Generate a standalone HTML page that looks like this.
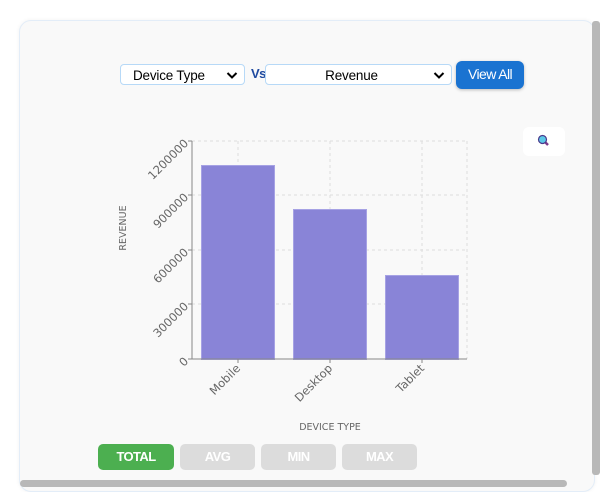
<!DOCTYPE html>
<html><head><style>
body{margin:0;width:610px;height:490px;background:#fff;position:relative;overflow:hidden;font-family:"Liberation Sans",sans-serif}
.card{position:absolute;left:19px;top:20px;width:574px;height:470px;background:#f9f9f9;border:1px solid #e3edf8;border-radius:12px;box-shadow:0 0 4px rgba(0,0,0,.06)}
.vs{position:absolute;left:592px;top:21px;width:8px;height:454px;background:#b8b8b8;border-radius:3px}
.hs{position:absolute;left:20px;top:480px;width:547px;height:7px;background:#b8b8b8;border-radius:4px}
.sel{position:absolute;top:64px;height:21px;border:1px solid #b7d9f7;border-radius:4px;background:#fff;font-size:13.5px;line-height:21px;box-sizing:border-box;color:#000;letter-spacing:-.2px}
.btn{position:absolute;top:444px;height:26px;border-radius:5px;color:#fff;font-weight:bold;font-size:13px;line-height:26px;text-align:center;letter-spacing:-.6px}
</style></head><body>
<div class="card"></div>
<div class="vs"></div><div class="hs"></div>
<div class="sel" style="left:120px;width:125px;padding-left:12px">Device Type<svg style="position:absolute;right:6px;top:6px" width="12" height="9" viewBox="0 0 12 9"><path d="M1.5 2l4.5 4.5 4.5-4.5" stroke="#000" stroke-width="2" fill="none"/></svg></div>
<div style="position:absolute;left:251px;top:66px;font-size:13px;font-weight:bold;color:#1f4aa0;letter-spacing:-.5px">Vs</div>
<div class="sel" style="left:265px;width:187px;text-align:center;padding-right:14px">Revenue<svg style="position:absolute;right:6px;top:6px" width="12" height="9" viewBox="0 0 12 9"><path d="M1.5 2l4.5 4.5 4.5-4.5" stroke="#000" stroke-width="2" fill="none"/></svg></div>
<div style="position:absolute;left:456px;top:61px;width:68px;height:28px;background:#1a73d1;border-radius:6px;color:#fff;font-size:14px;line-height:27px;text-align:center;letter-spacing:-.6px;box-shadow:0 1px 3px rgba(0,0,0,.25)">View All</div>
<div style="position:absolute;left:523px;top:127px;width:42px;height:29px;background:#fff;border-radius:6px"></div>
<svg style="position:absolute;left:537px;top:134px" width="14" height="14" viewBox="0 0 14 14"><line x1="7" y1="7" x2="11" y2="11" stroke="#7a3a8c" stroke-width="2.5"/><circle cx="5.5" cy="5.5" r="4" fill="#5cc8e8" stroke="#4a3a8c" stroke-width="1.2"/></svg>
<svg style="position:absolute;left:0;top:0" width="610" height="490">
<g stroke="#ddd" stroke-dasharray="3,3" stroke-width="1">
<line x1="192" y1="141" x2="467" y2="141"/><line x1="192" y1="195" x2="467" y2="195"/><line x1="192" y1="250" x2="467" y2="250"/><line x1="192" y1="304" x2="467" y2="304"/>
<line x1="238" y1="141" x2="238" y2="359"/><line x1="330" y1="141" x2="330" y2="359"/><line x1="422" y1="141" x2="422" y2="359"/><line x1="467" y1="141" x2="467" y2="359"/>
</g>
<g fill="#8984d7" stroke="#a6a2e4">
<rect x="201.5" y="165.5" width="73" height="194"/><rect x="293.5" y="209.5" width="73" height="150"/><rect x="385.5" y="275.5" width="73" height="84"/>
</g>
<line x1="192" y1="141" x2="192" y2="359" stroke="#888"/><line x1="192" y1="359" x2="467" y2="359" stroke="#888"/>
<g stroke="#888"><line x1="188" y1="141" x2="192" y2="141"/><line x1="188" y1="195" x2="192" y2="195"/><line x1="188" y1="250" x2="192" y2="250"/><line x1="188" y1="304" x2="192" y2="304"/><line x1="188" y1="359" x2="192" y2="359"/>
<line x1="238" y1="359" x2="238" y2="363"/><line x1="330" y1="359" x2="330" y2="363"/><line x1="422" y1="359" x2="422" y2="363"/></g>
<g font-family="'DejaVu Sans',sans-serif" font-size="11.5" fill="#666" text-anchor="end">
<text transform="translate(189,144) rotate(-45)">1200000</text>
<text transform="translate(189,198) rotate(-45)">900000</text>
<text transform="translate(189,253) rotate(-45)">600000</text>
<text transform="translate(189,307) rotate(-45)">300000</text>
<text transform="translate(189,362) rotate(-45)">0</text>
<text transform="translate(241,369) rotate(-45)">Mobile</text>
<text transform="translate(333,369) rotate(-45)">Desktop</text>
<text transform="translate(425,369) rotate(-45)">Tablet</text>
</g>
<g font-family="'DejaVu Sans',sans-serif" font-size="9.5" fill="#666" text-anchor="middle">
<text transform="translate(126,228) rotate(-90)">REVENUE</text>
<text x="330" y="430">DEVICE TYPE</text>
</g>
</svg>
<div class="btn" style="left:98px;width:76px;background:#4caf50">TOTAL</div>
<div class="btn" style="left:180px;width:75px;background:#dcdcdc">AVG</div>
<div class="btn" style="left:261px;width:75px;background:#dcdcdc">MIN</div>
<div class="btn" style="left:342px;width:75px;background:#dcdcdc">MAX</div>
</body></html>
